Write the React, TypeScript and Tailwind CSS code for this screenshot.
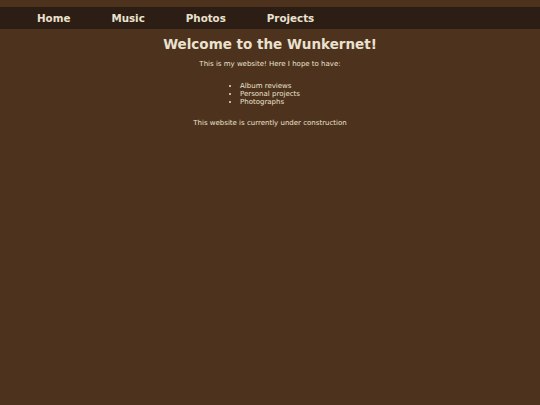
export default function App() {
  return (
    <div
      className="min-h-[405px] bg-[#4d331d] pt-[7px] text-[#ebe1cf]"
      style={{ fontFamily: '"DejaVu Sans", Verdana, sans-serif' }}
    >
      <nav className="flex h-[22px] items-center gap-[41px] bg-[#2c1e14] pt-[2px] pl-[37px] text-[10.3px] font-bold">
        <a>Home</a>
        <a>Music</a>
        <a>Photos</a>
        <a>Projects</a>
      </nav>
      <main className="flex flex-col items-center">
        <h1 className="mt-[6px] text-[13.5px] leading-[18px] font-bold">Welcome to the Wunkernet!</h1>
        <p className="mt-[7px] text-[7px] leading-[9px]">This is my website! Here I hope to have:</p>
        <ul className="mt-[13px] list-disc pl-0 text-[7px] leading-[8px]">
          <li>Album reviews</li>
          <li>Personal projects</li>
          <li>Photographs</li>
        </ul>
        <p className="mt-[13px] text-[7px] leading-[9px]">This website is currently under construction</p>
      </main>
    </div>
  );
}
